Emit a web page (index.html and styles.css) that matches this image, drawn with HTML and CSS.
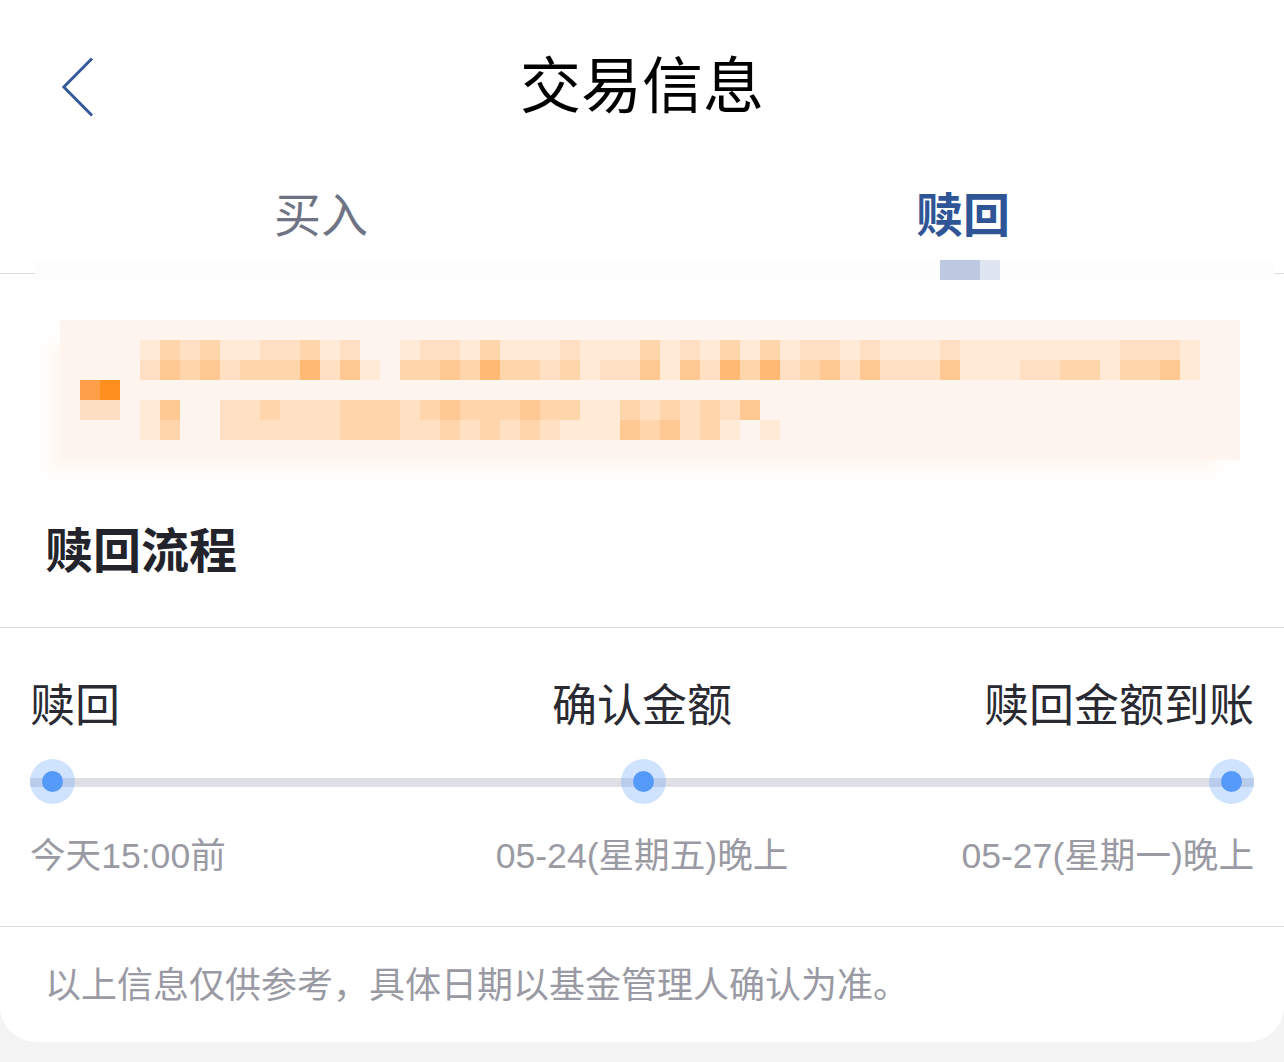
FILE: index.html
```html
<!DOCTYPE html>
<html lang="zh-CN">
<head>
<meta charset="utf-8">
<title>交易信息</title>
<link rel="stylesheet" href="styles.css">
</head>
<body>
<div class="panel">
  <header class="header">
    <svg class="back" width="32" height="60" viewBox="0 0 32 60"><path d="M30 1.500 L1.800 30 L30 58.500" fill="none" stroke="#35589a" stroke-width="3"/></svg>
    <h1 class="title">交易信息</h1>
  </header>
  <nav class="tabs">
    <div class="tab">买入</div>
    <div class="tab tab-active">赎回</div>
  </nav>
  <div class="rule">
    <span class="rule-side rule-left"></span>
    <span class="rule-mid"><span class="marker"></span><span class="marker-fade"></span></span>
    <span class="rule-side rule-right"></span>
  </div>
  <section class="notice">
    <div class="notice-icon"><i class="ic1"></i><i class="ic2"></i><i class="ic3"></i><i class="ic3"></i></div>
    <div class="notice-text">
      <div class="mrow"><i class="l1"></i><i class="l3"></i><i class="l2"></i><i class="l3"></i><i class="l1"></i><i class="l1"></i><i class="l2"></i><i class="l2"></i><i class="l3"></i><i class="l1"></i><i class="l2"></i><i class="l0"></i><i class="l0"></i><i class="l1"></i><i class="l2"></i><i class="l2"></i><i class="l1"></i><i class="l3"></i><i class="l1"></i><i class="l1"></i><i class="l1"></i><i class="l2"></i><i class="l1"></i><i class="l1"></i><i class="l1"></i><i class="l3"></i><i class="l1"></i><i class="l2"></i><i class="l1"></i><i class="l3"></i><i class="l1"></i><i class="l3"></i><i class="l1"></i><i class="l2"></i><i class="l2"></i><i class="l1"></i><i class="l2"></i><i class="l1"></i><i class="l1"></i><i class="l1"></i><i class="l2"></i><i class="l1"></i><i class="l1"></i><i class="l1"></i><i class="l1"></i><i class="l1"></i><i class="l1"></i><i class="l1"></i><i class="l1"></i><i class="l2"></i><i class="l2"></i><i class="l2"></i><i class="l1"></i></div>
      <div class="mrow"><i class="l2"></i><i class="l4"></i><i class="l3"></i><i class="l4"></i><i class="l2"></i><i class="l3"></i><i class="l3"></i><i class="l3"></i><i class="l5"></i><i class="l2"></i><i class="l4"></i><i class="l1"></i><i class="l0"></i><i class="l3"></i><i class="l3"></i><i class="l4"></i><i class="l3"></i><i class="l5"></i><i class="l3"></i><i class="l3"></i><i class="l2"></i><i class="l3"></i><i class="l1"></i><i class="l2"></i><i class="l2"></i><i class="l4"></i><i class="l1"></i><i class="l4"></i><i class="l2"></i><i class="l5"></i><i class="l3"></i><i class="l5"></i><i class="l2"></i><i class="l3"></i><i class="l4"></i><i class="l2"></i><i class="l4"></i><i class="l2"></i><i class="l2"></i><i class="l2"></i><i class="l4"></i><i class="l1"></i><i class="l1"></i><i class="l1"></i><i class="l2"></i><i class="l2"></i><i class="l3"></i><i class="l3"></i><i class="l1"></i><i class="l3"></i><i class="l3"></i><i class="l4"></i><i class="l1"></i></div>
      <div class="mrow mrow-gap"><i class="l1"></i><i class="l4"></i><i class="l0"></i><i class="l0"></i><i class="l2"></i><i class="l2"></i><i class="l3"></i><i class="l2"></i><i class="l2"></i><i class="l2"></i><i class="l3"></i><i class="l3"></i><i class="l3"></i><i class="l2"></i><i class="l3"></i><i class="l4"></i><i class="l3"></i><i class="l3"></i><i class="l3"></i><i class="l4"></i><i class="l3"></i><i class="l3"></i><i class="l1"></i><i class="l1"></i><i class="l3"></i><i class="l2"></i><i class="l3"></i><i class="l2"></i><i class="l3"></i><i class="l2"></i><i class="l4"></i></div>
      <div class="mrow"><i class="l1"></i><i class="l3"></i><i class="l0"></i><i class="l0"></i><i class="l2"></i><i class="l2"></i><i class="l2"></i><i class="l2"></i><i class="l2"></i><i class="l2"></i><i class="l3"></i><i class="l3"></i><i class="l3"></i><i class="l2"></i><i class="l2"></i><i class="l3"></i><i class="l2"></i><i class="l3"></i><i class="l2"></i><i class="l3"></i><i class="l2"></i><i class="l1"></i><i class="l1"></i><i class="l1"></i><i class="l4"></i><i class="l3"></i><i class="l4"></i><i class="l2"></i><i class="l3"></i><i class="l1"></i><i class="l0"></i><i class="l1"></i></div>
    </div>
  </section>
  <h2 class="section-title">赎回流程</h2>
  <section class="flow">
    <div class="flow-row flow-labels"><span>赎回</span><span>确认金额</span><span>赎回金额到账</span></div>
    <div class="track"><span class="node"></span><span class="node node-mid"></span><span class="node"></span></div>
    <div class="flow-row flow-dates"><span>今天15:00前</span><span>05-24(星期五)晚上</span><span>05-27(星期一)晚上</span></div>
  </section>
  <p class="note">以上信息仅供参考，具体日期以基金管理人确认为准。</p>
</div>
</body>
</html>
```

FILE: styles.css
```css
* { box-sizing: border-box; }
html, body { margin: 0; height: 100%; }
body {
  background: #f4f4f5;
  font-family: "Liberation Sans", "Noto Sans CJK SC", sans-serif;
  overflow: hidden;
}
.panel {
  height: 1042px;
  background: #fff;
  border-radius: 0 0 36px 36px;
}
.header {
  position: relative;
  height: 170px;
  padding-top: 4px;
  display: flex;
  align-items: center;
  justify-content: center;
}
.back { position: absolute; left: 62px; top: 57px; }
.title { margin: 0; font-size: 61px; line-height: 1; font-weight: 400; color: #000; }
.tabs { height: 90px; display: grid; grid-template-columns: 1fr 1fr; }
.tab {
  display: flex;
  align-items: center;
  justify-content: center;
  padding-bottom: 7px;
  font-size: 47px;
  color: #6f7485;
}
.tab-active { color: #2f5597; font-weight: 700; }
.rule { height: 20px; display: flex; }
.rule-side { height: 14px; border-bottom: 1px solid #dcdcdc; }
.rule-left { width: 35px; }
.rule-right { width: 10px; }
.rule-mid { flex: 1; position: relative; background: #fdfdfd; }
.marker { position: absolute; left: 905px; top: 0; width: 40px; height: 20px; background: #bcc9e1; }
.marker-fade { position: absolute; left: 945px; top: 0; width: 20px; height: 20px; background: #dfe5f1; }
.notice {
  margin: 40px 44px 0 60px;
  height: 140px;
  background: #fef6ee;
  box-shadow: -18px 18px 14px -6px rgba(254, 246, 238, .9);
  display: flex;
  padding: 20px 0 0 20px;
}
.notice-icon {
  width: 40px;
  padding-top: 40px;
  display: flex;
  flex-wrap: wrap;
  align-content: flex-start;
}
.notice-icon i { width: 20px; height: 20px; }
.ic1 { background: #fea04a; }
.ic2 { background: #ff8f1f; }
.ic3 { background: #fedfc4; }
.notice-text { margin-left: 20px; }
.mrow { display: flex; height: 20px; }
.mrow-gap { margin-top: 20px; }
.mrow i { width: 20px; height: 20px; flex: none; }
.l0 { background: #fef6ee; }
.l1 { background: #ffead6; }
.l2 { background: #ffe0c2; }
.l3 { background: #ffd5ab; }
.l4 { background: #ffc791; }
.l5 { background: #ffb975; }
.section-title {
  margin: 0;
  padding: 62px 0 0 45px;
  height: 168px;
  font-size: 48px;
  line-height: 60px;
  font-weight: 700;
  color: #23232b;
  border-bottom: 1px solid #dcdcdc;
}
.flow {
  height: 299px;
  padding: 51px 30px 0;
  border-bottom: 1px solid #dcdcdc;
}
.flow-row { display: grid; grid-template-columns: 1fr auto 1fr; }
.flow-row span:last-child { text-align: right; }
.flow-labels { font-size: 45px; line-height: 56px; color: #2a2a33; }
.flow-dates { font-size: 35.6px; line-height: 46px; color: #9a9aa4; margin-top: 29px; }
.track {
  position: relative;
  margin-top: 24px;
  height: 45px;
  display: flex;
  justify-content: space-between;
}
.track::before {
  content: "";
  position: absolute;
  left: 0;
  right: 0;
  top: 19px;
  height: 9px;
  background: #dfdfe6;
}
.node {
  position: relative;
  width: 45px;
  height: 45px;
  border-radius: 50%;
  background: rgba(85, 153, 251, .28);
}
.node-mid { margin-left: 2px; }
.node::after {
  content: "";
  position: absolute;
  left: 12px;
  top: 12px;
  width: 21px;
  height: 21px;
  border-radius: 50%;
  background: #5599fb;
}
.note {
  margin: 0;
  padding: 36px 0 0 45px;
  font-size: 36px;
  line-height: 46px;
  color: #9a9aa4;
}
```
